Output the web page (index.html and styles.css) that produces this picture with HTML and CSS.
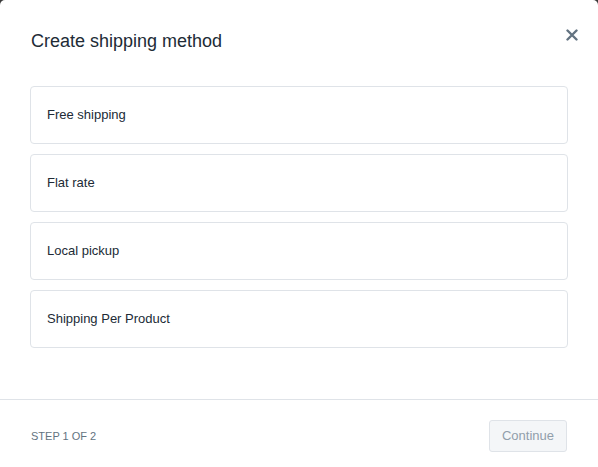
FILE: index.html
```html
<!DOCTYPE html>
<html>
<head>
<meta charset="utf-8">
<link rel="stylesheet" href="styles.css">
</head>
<body>
<div class="modal">
  <div class="header">
    <h1 class="title">Create shipping method</h1>
    <button class="close" aria-label="Close">
      <svg width="12" height="12" viewBox="0 0 12 12"><path d="M1.5 1.5 L10.5 10.5 M10.5 1.5 L1.5 10.5" stroke="#637381" stroke-width="2.4" stroke-linecap="round"/></svg>
    </button>
  </div>
  <div class="options">
    <div class="option">Free shipping</div>
    <div class="option">Flat rate</div>
    <div class="option">Local pickup</div>
    <div class="option">Shipping Per Product</div>
  </div>
  <div class="footer">
    <span class="step">STEP 1 OF 2</span>
    <button class="continue" disabled>Continue</button>
  </div>
</div>
</body>
</html>
```
FILE: styles.css
```css
html, body {
  margin: 0;
  padding: 0;
  background: #3a3a3a;
  height: 100%;
  overflow: hidden;
}
.modal {
  width: 598px;
  height: 480px;
  background: #fff;
  border-radius: 5px 5px 0 0;
  font-family: "Liberation Sans", Arial, sans-serif;
  box-sizing: border-box;
}
.header {
  display: flex;
  justify-content: space-between;
  align-items: flex-start;
  padding: 29px 20px 0 31px;
}
.title {
  margin: 0;
  font-size: 18px;
  line-height: 24px;
  font-weight: normal;
  color: #212b36;
}
.close {
  margin-top: 0;
  background: none;
  border: 0;
  padding: 0;
  width: 12px;
  height: 12px;
  display: flex;
  cursor: pointer;
}
.options {
  display: flex;
  flex-direction: column;
  gap: 10px;
  padding: 33px 30px 0 30px;
}
.option {
  box-sizing: border-box;
  height: 58px;
  border: 1px solid #dfe3e8;
  border-radius: 4px;
  display: flex;
  align-items: center;
  padding: 0 16px 2px;
  font-size: 13px;
  color: #212b36;
}
.footer {
  margin-top: 51px;
  border-top: 1px solid #dfe3e8;
  display: flex;
  justify-content: space-between;
  align-items: center;
  padding: 20px 31px 0 31px;
}
.step {
  font-size: 11px;
  color: #637381;
}
.continue {
  height: 32px;
  width: 78px;
  background: #f4f6f8;
  border: 1px solid #dfe3e8;
  border-radius: 3px;
  color: #919eab;
  font-family: "Liberation Sans", Arial, sans-serif;
  font-size: 13px;
  padding: 0 0 2px;
}
```
